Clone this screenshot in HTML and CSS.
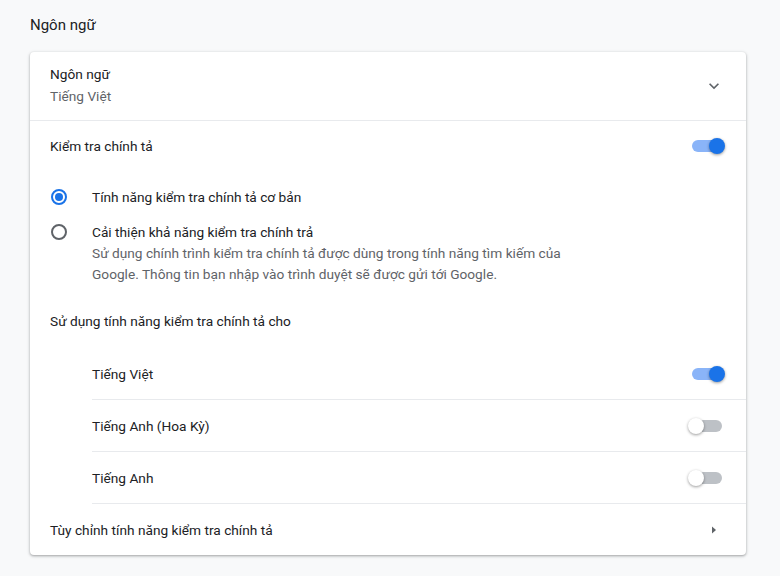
FILE: index.html
```html
<!DOCTYPE html>
<html lang="vi">
<head>
    <meta charset="UTF-8">
    <meta name="viewport" content="width=device-width, initial-scale=1.0">
    <title>Ngôn ngữ</title>
    <link rel="stylesheet" href="styles.css">
</head>
<body>
    <h2 class="section-title">Ngôn ngữ</h2>

    <div class="card">
        <div class="row row-lang">
            <div class="row-text">
                <div>Ngôn ngữ</div>
                <div class="secondary">Tiếng Việt</div>
            </div>
            <svg class="chevron" width="20" height="20" viewBox="0 0 24 24"><path d="M7.41 8.59L12 13.17l4.59-4.58L18 10l-6 6-6-6z" fill="#5f6368"/></svg>
        </div>

        <div class="row row-toggle">
            <div class="row-text">Kiểm tra chính tả</div>
            <span class="toggle on"><span class="knob"></span></span>
        </div>

        <div class="radio-group">
            <div class="radio-item">
                <span class="radio checked"></span>
                <div class="radio-label">Tính năng kiểm tra chính tả cơ bản</div>
            </div>
            <div class="radio-item">
                <span class="radio"></span>
                <div class="radio-label">
                    Cải thiện khả năng kiểm tra chính trả
                    <div class="secondary desc">Sử dụng chính trình kiểm tra chính tả được dùng trong tính năng tìm kiếm của Google. Thông tin bạn nhập vào trình duyệt sẽ được gửi tới Google.</div>
                </div>
            </div>
        </div>

        <div class="sub-heading">Sử dụng tính năng kiểm tra chính tả cho</div>

        <div class="lang-list">
            <div class="lang-item">
                <span>Tiếng Việt</span>
                <span class="toggle on"><span class="knob"></span></span>
            </div>
            <div class="lang-item">
                <span>Tiếng Anh (Hoa Kỳ)</span>
                <span class="toggle"><span class="knob"></span></span>
            </div>
            <div class="lang-item">
                <span>Tiếng Anh</span>
                <span class="toggle"><span class="knob"></span></span>
            </div>
        </div>

        <div class="row row-link">
            <div class="row-text">Tùy chỉnh tính năng kiểm tra chính tả</div>
            <svg class="arrow" width="20" height="20" viewBox="0 0 20 20"><path d="M8 6.5l4 3.5-4 3.5z" fill="#5f6368"/></svg>
        </div>
    </div>
</body>
</html>
```

FILE: styles.css
```css
body {
    margin: 0;
    padding: 14px 34px 22px 30px;
    background-color: #f8f9fa;
    font-family: Roboto, "Noto Sans", Arial, sans-serif;
    font-size: 13.7px;
    color: #202124;
}
.section-title {
    font-size: 15px;
    font-weight: 400;
    margin: 0 0 16px 0;
    line-height: 22px;
}
.card {
    background-color: white;
    border-radius: 4px;
    box-shadow: 0 1px 2px rgba(60,64,67,0.3), 0 1px 3px 1px rgba(60,64,67,0.15);
}
.row {
    display: flex;
    align-items: center;
    justify-content: space-between;
    padding: 0 20px 0 20px;
}
.row-lang {
    height: 68px;
    border-bottom: 1px solid #e8eaed;
}
.row-lang .row-text {
    line-height: 22px;
    margin-top: -2px;
}
.secondary {
    color: #5f6368;
}
.desc {
    max-width: 485px;
}
.chevron {
    margin-right: 2px;
}
.row-toggle {
    height: 50px;
}
.radio-group {
    padding: 16px 20px 0 20px;
}
.radio-item {
    display: flex;
    align-items: flex-start;
    margin-bottom: 14px;
}
.radio-label {
    line-height: 21px;
}
.radio {
    width: 12px;
    height: 12px;
    border: 2px solid #5f6368;
    border-radius: 50%;
    margin: 2px 25px 0 1px;
    flex-shrink: 0;
    position: relative;
}
.radio.checked {
    border-color: #1a73e8;
}
.radio.checked::after {
    content: "";
    position: absolute;
    left: 2px;
    top: 2px;
    width: 8px;
    height: 8px;
    border-radius: 50%;
    background-color: #1a73e8;
}
.sub-heading {
    padding: 12px 20px 0 20px;
    line-height: 20px;
}
.lang-list {
    padding: 17px 0 0 62px;
}
.lang-item {
    display: flex;
    align-items: center;
    justify-content: space-between;
    height: 51px;
    padding-right: 20px;
    border-bottom: 1px solid #e8eaed;
}
.row-link {
    height: 51px;
}
.arrow {
    margin-right: 2px;
}
.toggle {
    position: relative;
    display: inline-block;
    width: 30px;
    height: 12px;
    border-radius: 6px;
    background-color: #bdc1c6;
    margin-right: 4px;
}
.toggle .knob {
    position: absolute;
    top: -2px;
    left: -4px;
    width: 16px;
    height: 16px;
    border-radius: 50%;
    background-color: white;
    box-shadow: 0 1px 3px rgba(0,0,0,0.4);
}
.toggle.on {
    background-color: #8ab4f8;
}
.toggle.on .knob {
    left: auto;
    right: -3px;
    background-color: #1a73e8;
}
```
